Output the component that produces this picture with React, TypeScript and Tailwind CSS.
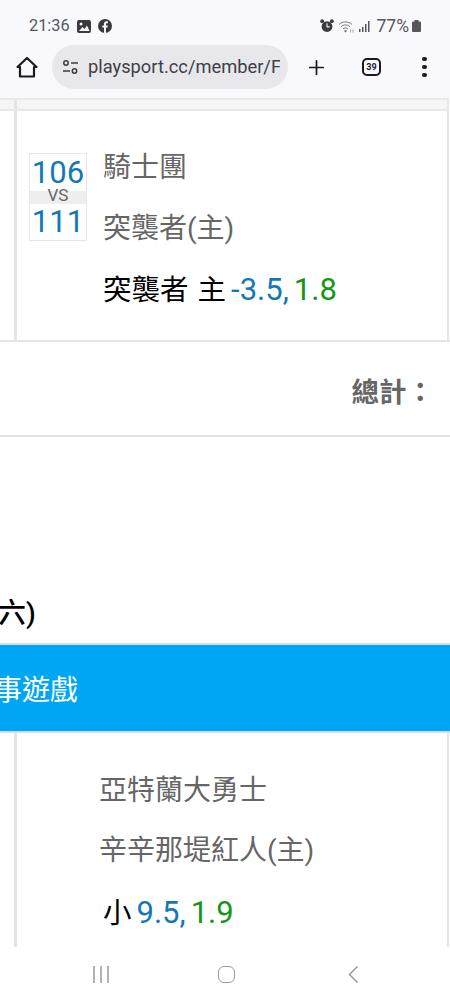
import { Plus } from "lucide-react";

const font = "font-['Roboto','Noto_Sans_CJK_TC',sans-serif]";

function StatusBar() {
  return (
    <div className="flex h-[44px] shrink-0 items-end justify-between pb-[8px] pl-[29px] pr-[29px] text-[#55565c]">
      <div className="flex items-center gap-[7px]">
        <span className="text-[16.300px] leading-[20px]">21:36</span>
        <svg width="14" height="13" viewBox="0 0 14 13">
          <rect width="14" height="13" rx="2" fill="#3a3a40" />
          <circle cx="4" cy="4" r="1.5" fill="#f8f8fd" />
          <path d="M2 11l3.5-4 2 2 2.5-3.5L12.5 11z" fill="#f8f8fd" />
        </svg>
        <svg width="14" height="14" viewBox="0 0 14 14">
          <circle cx="7" cy="7" r="7" fill="#3a3a40" />
          <path d="M6 14V8.500H4.300V6.500H6V5c0-1.800 1-2.800 2.600-2.800h1.300v2H9c-.7 0-1 .3-1 1v1.300h1.800L9.500 8.500H8V14z" fill="#f8f8fd" />
        </svg>
      </div>
      <div className="flex items-center">
        <svg width="14" height="14" viewBox="0 0 13 13" className="mr-[4px]">
          <circle cx="6.500" cy="7" r="5" fill="#3a3a40" />
          <circle cx="2" cy="2" r="1.800" fill="#3a3a40" />
          <circle cx="11" cy="2" r="1.800" fill="#3a3a40" />
          <path d="M6.500 4v3.300H9" stroke="#f8f8fd" strokeWidth="1" fill="none" />
        </svg>
        <svg width="16" height="13" viewBox="0 0 16 13" fill="none" stroke="#777" strokeWidth="1" className="mr-[5px]">
          <path d="M1 4.500c3.500-3.500 9.500-3.500 13 0" />
          <path d="M3 6.700c2.500-2.400 6.500-2.400 9 0" />
          <path d="M5 8.900c1.500-1.300 3.500-1.300 5 0" />
          <circle cx="7.500" cy="11" r="0.800" fill="#777" />
          <path d="M12.500 9.500v3M15 9.500v3" stroke="#aaa" />
        </svg>
        <svg width="12" height="12" viewBox="0 0 12 12" className="mr-[6px]">
          <rect x="0" y="9" width="1.500" height="3" fill="#55565c" />
          <rect x="3" y="7" width="1.500" height="5" fill="#55565c" />
          <rect x="6" y="4" width="1.500" height="8" fill="#55565c" />
          <rect x="9" y="1" width="1.500" height="11" fill="#55565c" />
        </svg>
        <span className="text-[17.500px] leading-[20px]">77%</span>
        <svg width="9" height="12" viewBox="0 0 9 12" className="ml-[3px]">
          <rect x="2.500" width="4" height="2" fill="#55565c" />
          <rect y="1.500" width="9" height="10.500" rx="1" fill="#55565c" />
        </svg>
      </div>
    </div>
  );
}

function Toolbar() {
  return (
    <div className="flex h-[54px] shrink-0 items-center pb-[8px] pl-[16px]">
      <svg width="22" height="22" viewBox="0 0 22 22" fill="none" stroke="#1b1b1f" strokeWidth="2.200" strokeLinejoin="round">
        <path d="M1.500 11 11 2l9.500 9H18v9.500H4V11z" />
      </svg>
      <div className="ml-[14px] flex h-[44px] w-[236px] items-center overflow-hidden rounded-full bg-[#e7e7ec] pl-[10px]">
        <svg width="17" height="14" viewBox="0 0 17 14" fill="none" stroke="#3c3c42" strokeWidth="1.500" className="shrink-0">
          <circle cx="4" cy="3" r="2.200" />
          <path d="M9 3h7" />
          <circle cx="12.500" cy="11" r="2.200" />
          <path d="M1 11h7" />
        </svg>
        <span className="ml-[9px] w-[192px] overflow-hidden whitespace-nowrap text-[18.300px] leading-[24px] text-[#3f4046]">
          playsport.cc/member/FI
        </span>
      </div>
      <Plus size={23} strokeWidth={1.800} color="#1b1b1f" className="ml-[17px]" />
      <div className="ml-[34px] flex h-[18px] w-[19px] items-center justify-center rounded-[5px] border-2 border-[#1b1b1f] text-[9px] font-bold leading-none text-[#1b1b1f]">
        39
      </div>
      <div className="ml-[41px] flex flex-col gap-[3.500px]">
        <span className="size-[4.500px] rounded-full bg-[#1b1b1f]" />
        <span className="size-[4.500px] rounded-full bg-[#1b1b1f]" />
        <span className="size-[4.500px] rounded-full bg-[#1b1b1f]" />
      </div>
    </div>
  );
}

function Scores() {
  return (
    <div className="flex w-[58px] flex-col self-start border border-[#e6e6e6] text-center text-[#1478b4]">
      <div className="h-[37px] text-[31px] leading-[37px]">106</div>
      <div className="h-[13px] bg-[#eeeeee] text-[17px] leading-[8px] text-[#666]">VS</div>
      <div className="h-[36px] text-[31px] leading-[36px]">111</div>
    </div>
  );
}

function Pick({ label, line, odds }: { label: string; line: string; odds: string }) {
  return (
    <div className="text-[28.500px] leading-[36px] text-black">
      <span className="[word-spacing:2px]">{label}</span>
      <span className="ml-[5px] text-[31px] text-[#1478b4]">{line},</span>
      <span className="ml-[5px] text-[31px] text-[#169616]">{odds}</span>
    </div>
  );
}

export default function App() {
  return (
    <div className={`flex h-[1000px] w-[450px] flex-col overflow-hidden bg-white ${font}`}>
      <div className="shrink-0 bg-[#f8f8fd]">
        <StatusBar />
        <Toolbar />
      </div>

      <div className="flex min-h-0 flex-1 flex-col">
        <div className="mr-[1px] flex h-[13px] shrink-0 border-y-2 border-r-2 border-[#e8e8e8] bg-[#f5f5f5]">
          <div className="w-[17px] border-r-[3px] border-[#e4e4e4]" />
        </div>

        <div className="flex h-[231px] shrink-0 border-b-2 border-[#e4e4e4]">
          <div className="w-[17px] shrink-0 border-r-[3px] border-[#e4e4e4]" />
          <div className="mr-[1px] flex flex-1 border-r-2 border-[#e4e4e4] pl-[12px] pt-[42px]">
            <Scores />
            <div className="ml-[16px] text-[#666]">
              <div className="-mt-[2px] text-[28px] leading-[34px]">騎士團</div>
              <div className="mt-[27px] text-[28px] leading-[34px]">突襲者(主)</div>
              <div className="mt-[26px]">
                <Pick label="突襲者 主" line="-3.5" odds="1.8" />
              </div>
            </div>
          </div>
        </div>

        <div className="flex h-[95px] shrink-0 items-center justify-end border-b-2 border-[#e4e4e4] pr-[16px] pt-[8px] text-[27.500px] font-bold text-[#666]">
          總計：
        </div>

        <div className="flex h-[206px] shrink-0 items-end pb-[12px] text-[28px] font-medium leading-[34px] text-black">
          <span className="-ml-[2px]">六)</span>
        </div>

        <div className="flex h-[90px] shrink-0 items-center overflow-hidden border-y-2 border-[#dcdcdc] bg-[#00a6f6] pt-[6px] text-[28px] text-white">
          <span className="-ml-[6px]">事遊戲</span>
        </div>

        <div className="flex min-h-0 flex-1">
          <div className="w-[17px] shrink-0 border-r-[3px] border-[#e4e4e4]" />
          <div className="mr-[1px] flex-1 border-r-2 border-[#e4e4e4] pl-[82px] pt-[40px] text-[#666]">
            <div className="text-[28px] leading-[36px]">亞特蘭大勇士</div>
            <div className="mt-[24px] text-[28px] leading-[36px]">辛辛那堤紅人(主)</div>
            <div className="mt-[26px] pl-[4px]">
              <Pick label="小" line="9.5" odds="1.9" />
            </div>
          </div>
        </div>
      </div>

      <div className="flex h-[53px] shrink-0 items-center bg-white pl-[93px] pt-[2px]">
        <svg width="16" height="17" viewBox="0 0 16 17" stroke="#9a9a9a" strokeWidth="1.500">
          <path d="M1 0v17M8 0v17M15 0v17" />
        </svg>
        <div className="ml-[109px] h-[17px] w-[17px] rounded-[6px] border-[1.500px] border-[#9a9a9a]" />
        <svg width="10" height="17" viewBox="0 0 10 17" fill="none" stroke="#9a9a9a" strokeWidth="1.500" className="ml-[113px]">
          <path d="M9.500 .5 1.500 8.500l8 8" />
        </svg>
      </div>
    </div>
  );
}
